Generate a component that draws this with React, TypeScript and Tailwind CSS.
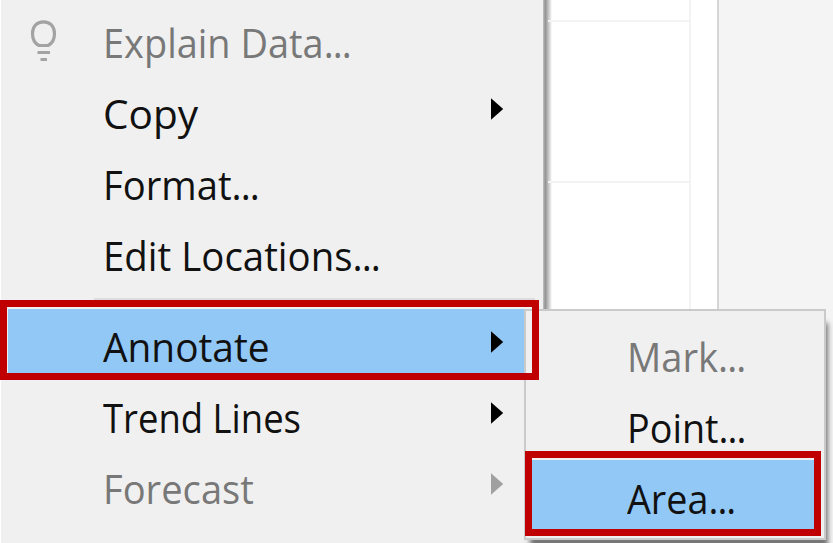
import React from "react";

type ItemProps = {
  label: string;
  fit: string;
  dots?: boolean;
  disabled?: boolean;
  submenu?: boolean;
  active?: boolean;
  icon?: React.ReactNode;
};

function Arrow({ disabled }: { disabled?: boolean }) {
  return (
    <svg
      className={`mb-[5px] ml-auto mr-[21px] h-[24px] w-[14px] shrink-0 ${disabled ? "text-[#a0a0a0]" : "text-black"}`}
      viewBox="0 0 14 24"
      fill="currentColor"
    >
      <path d="M1 1.3 L13.2 12 L1 22.7 Z" />
    </svg>
  );
}

function Bulb() {
  return (
    <svg className="h-[46px] w-[30px]" viewBox="0 0 30 46" fill="none" stroke="#a3a3a3" strokeWidth="3.2">
      <path d="M11 27.500 C6.800 25.500 4.500 21 4.500 15.500 C4.500 8.500 8.800 3.800 15.500 3.800 C22.200 3.800 26.500 8.500 26.500 15.500 C26.500 21 24.200 25.500 20 27.500 Z" strokeLinejoin="round" />
      <path d="M9.500 34.500 H22 M12.500 41.500 H19" />
    </svg>
  );
}

function Label({ label, fit, dots, disabled }: ItemProps) {
  return (
    <span
      className={`origin-left whitespace-nowrap pt-[3px] text-[41px] leading-[68px] ${fit} ${disabled ? "text-[#787878]" : "text-[#111]"}`}
    >
      {label}
      {dots && <span className="tracking-[-0.025em]">...</span>}
    </span>
  );
}

function MenuItem(props: ItemProps) {
  const { disabled, submenu, active, icon } = props;
  return (
    <div className={`flex h-[71px] items-center ${active ? "bg-[#91c8f6]" : ""}`}>
      <div className="flex w-[95px] shrink-0 pl-[20px]">{icon}</div>
      <Label {...props} />
      {submenu && <Arrow disabled={disabled} />}
    </div>
  );
}

function SubItem(props: ItemProps) {
  return (
    <div className={`flex h-[71px] items-center pl-[95px] pt-[2px] ${props.active ? "bg-[#91c8f6]" : ""}`}>
      <Label {...props} />
    </div>
  );
}

export default function App() {
  return (
    <div className="relative flex h-[543px] w-[833px] overflow-hidden bg-[#f4f4f4] font-['Open_Sans','Noto_Sans',sans-serif]">
      <div className="z-10 flex h-full w-[543px] shrink-0 flex-col border-l border-white bg-[#f0f0f0] pl-[7px] pr-[18px] pt-[5px]">
        <MenuItem label="Explain Data" fit="scale-x-[0.925]" dots disabled icon={<Bulb />} />
        <MenuItem label="Copy" fit="scale-x-[0.99]" submenu />
        <MenuItem label="Format" fit="scale-x-[0.932]" dots />
        <MenuItem label="Edit Locations" fit="scale-x-[0.937]" dots />
        <div className="-mr-[10px] ml-[86px] mt-[9px] h-[2px] bg-[#dcdcdc]" />
        <div className="h-[9px]" />
        <MenuItem label="Annotate" fit="scale-x-[0.947]" submenu active />
        <MenuItem label="Trend Lines" fit="scale-x-[0.889]" submenu />
        <MenuItem label="Forecast" fit="scale-x-[0.93]" disabled submenu />
      </div>
      <div className="h-full w-[9px] shrink-0 bg-linear-to-r from-[#c4c4c4] from-0% via-[#929292] via-25% to-white" />
      <div className="flex h-full w-[167px] shrink-0 flex-col border-r-2 border-[#d6d6d6] bg-white pr-[26px]">
        <div className="-ml-[4px] h-[22px] border-b-2 border-r-2 border-[#f3f3f3]" />
        <div className="-ml-[4px] h-[161px] border-b-2 border-r-2 border-[#f3f3f3]" />
        <div className="-ml-[4px] h-[161px] border-r-2 border-[#f3f3f3]" />
      </div>

      <div className="absolute left-[524px] top-[309px] z-20 h-[231px] w-[302px] border-2 border-[#cacaca] bg-[#f0f0f0] pl-[6px] pr-[7px] pt-[7px] shadow-[4px_12px_5px_-2px_#777]">
        <SubItem label="Mark" fit="scale-x-[0.93]" dots disabled />
        <SubItem label="Point" fit="scale-x-[0.92]" dots />
        <SubItem label="Area" fit="scale-x-[0.92]" dots active />
      </div>

      <div className="absolute left-0 top-[300px] z-30 h-[80px] w-[539px] border-[7px] border-[#c00000]" />
      <div className="absolute left-[525px] top-[451px] z-30 h-[85px] w-[296px] border-[7px] border-[#c00000]" />
    </div>
  );
}
